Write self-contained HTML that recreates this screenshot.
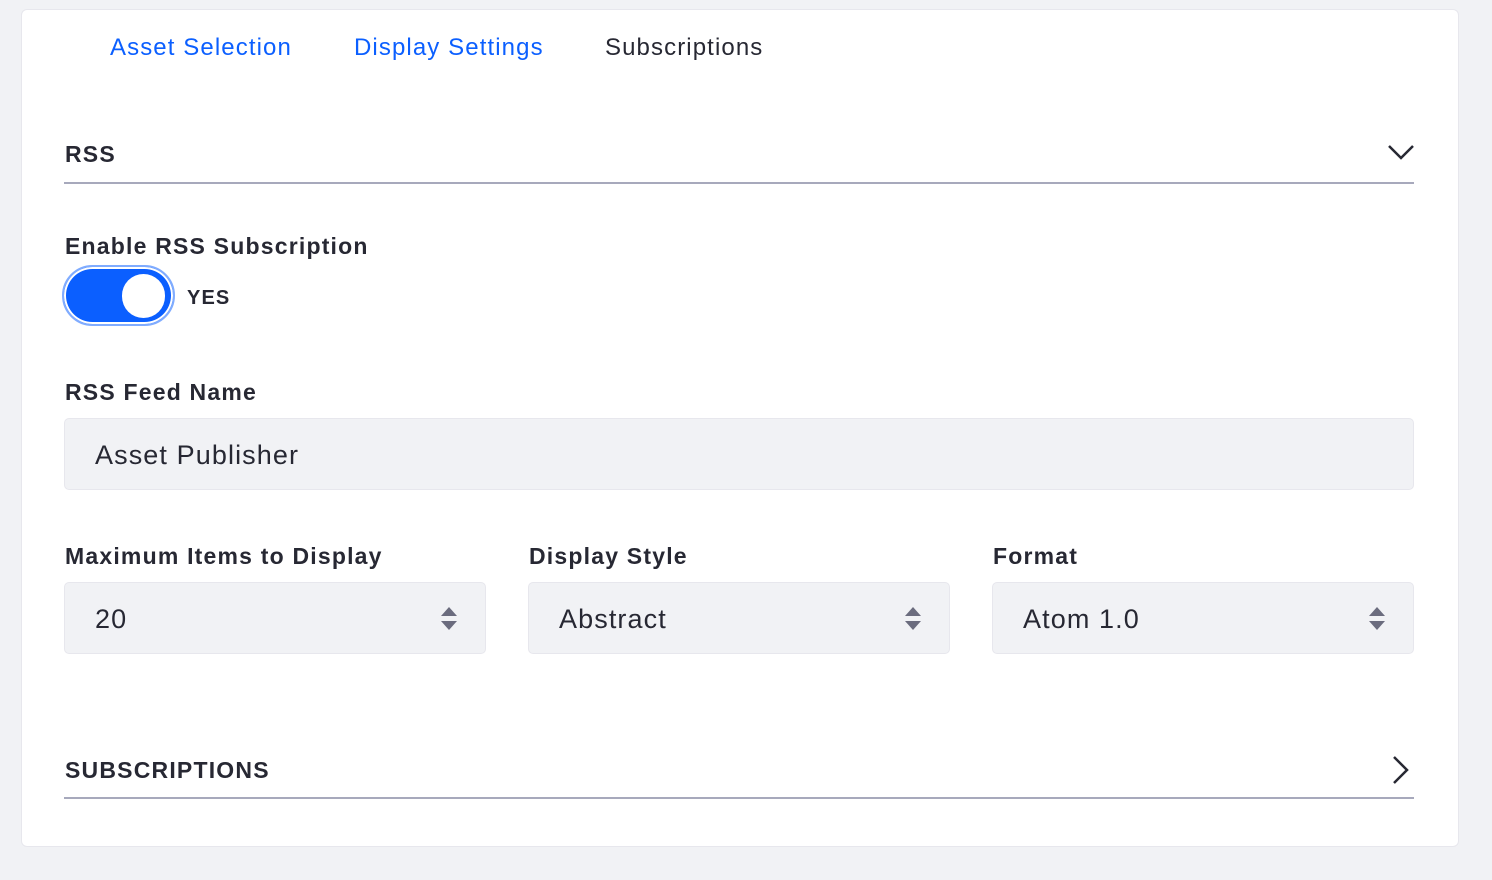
<!DOCTYPE html>
<html><head><style>
body{margin:0;width:1492px;height:880px;background:#f1f2f5;font-family:"Liberation Sans",sans-serif;color:#272833;position:relative;overflow:hidden;letter-spacing:1.1px}
.card{position:absolute;left:21px;top:9px;width:1436px;height:836px;background:#fff;border:1px solid #e7e7ed;border-radius:6px}
.a{position:absolute;white-space:nowrap}
.tab{top:34px;font-size:24px;color:#0b5fff}
.lab{font-size:23px;font-weight:bold;color:#272833;letter-spacing:1.2px}
.line{position:absolute;left:64px;width:1350px;height:2px;background:#a7a9bc}
.inp{position:absolute;background:#f1f2f5;border:1px solid #e7e7ed;border-radius:5px;box-sizing:border-box;font-size:27px;color:#272833;padding-left:30px;line-height:72px}
.sel svg{position:absolute;right:27px;top:23px}
</style></head><body>
<div class="card"></div>
<div class="a tab" style="left:110px">Asset Selection</div>
<div class="a tab" style="left:354px">Display Settings</div>
<div class="a tab" style="left:605px;color:#272833">Subscriptions</div>
<div class="a lab" style="left:65px;top:141px">RSS</div>
<svg class="a" style="left:1387px;top:143px" width="28" height="18"><path d="M2 3 L14 15 L26 3" fill="none" stroke="#272833" stroke-width="2.5"/></svg>
<div class="line" style="top:182px"></div>
<div class="a lab" style="left:65px;top:233px">Enable RSS Subscription</div>
<div class="a" style="left:62px;top:265px;width:113px;height:61px;border-radius:31px;border:2px solid #80acff;background:#0b5fff;box-sizing:border-box;box-shadow:inset 0 0 0 2px #fff"></div>
<div class="a" style="left:122px;top:274px;width:43px;height:44px;border-radius:22px;background:#fff"></div>
<div class="a" style="left:187px;top:287px;font-size:20px;font-weight:bold">YES</div>
<div class="a lab" style="left:65px;top:379px">RSS Feed Name</div>
<div class="inp" style="left:64px;top:418px;width:1350px;height:72px">Asset Publisher</div>
<div class="a lab" style="left:65px;top:543px">Maximum Items to Display</div>
<div class="a lab" style="left:529px;top:543px">Display Style</div>
<div class="a lab" style="left:993px;top:543px">Format</div>
<div class="inp sel" style="left:64px;top:582px;width:422px;height:72px">20<svg width="18" height="26"><path d="M9 1 L17 10 H1Z M1 15 H17 L9 24Z" fill="#6b6c7e"/></svg></div>
<div class="inp sel" style="left:528px;top:582px;width:422px;height:72px">Abstract<svg width="18" height="26"><path d="M9 1 L17 10 H1Z M1 15 H17 L9 24Z" fill="#6b6c7e"/></svg></div>
<div class="inp sel" style="left:992px;top:582px;width:422px;height:72px">Atom 1.0<svg width="18" height="26"><path d="M9 1 L17 10 H1Z M1 15 H17 L9 24Z" fill="#6b6c7e"/></svg></div>
<div class="a lab" style="left:65px;top:757px">SUBSCRIPTIONS</div>
<svg class="a" style="left:1391px;top:755px" width="20" height="30"><path d="M3 2 L16 15 L3 28" fill="none" stroke="#272833" stroke-width="2.5"/></svg>
<div class="line" style="top:797px"></div>
</body></html>
